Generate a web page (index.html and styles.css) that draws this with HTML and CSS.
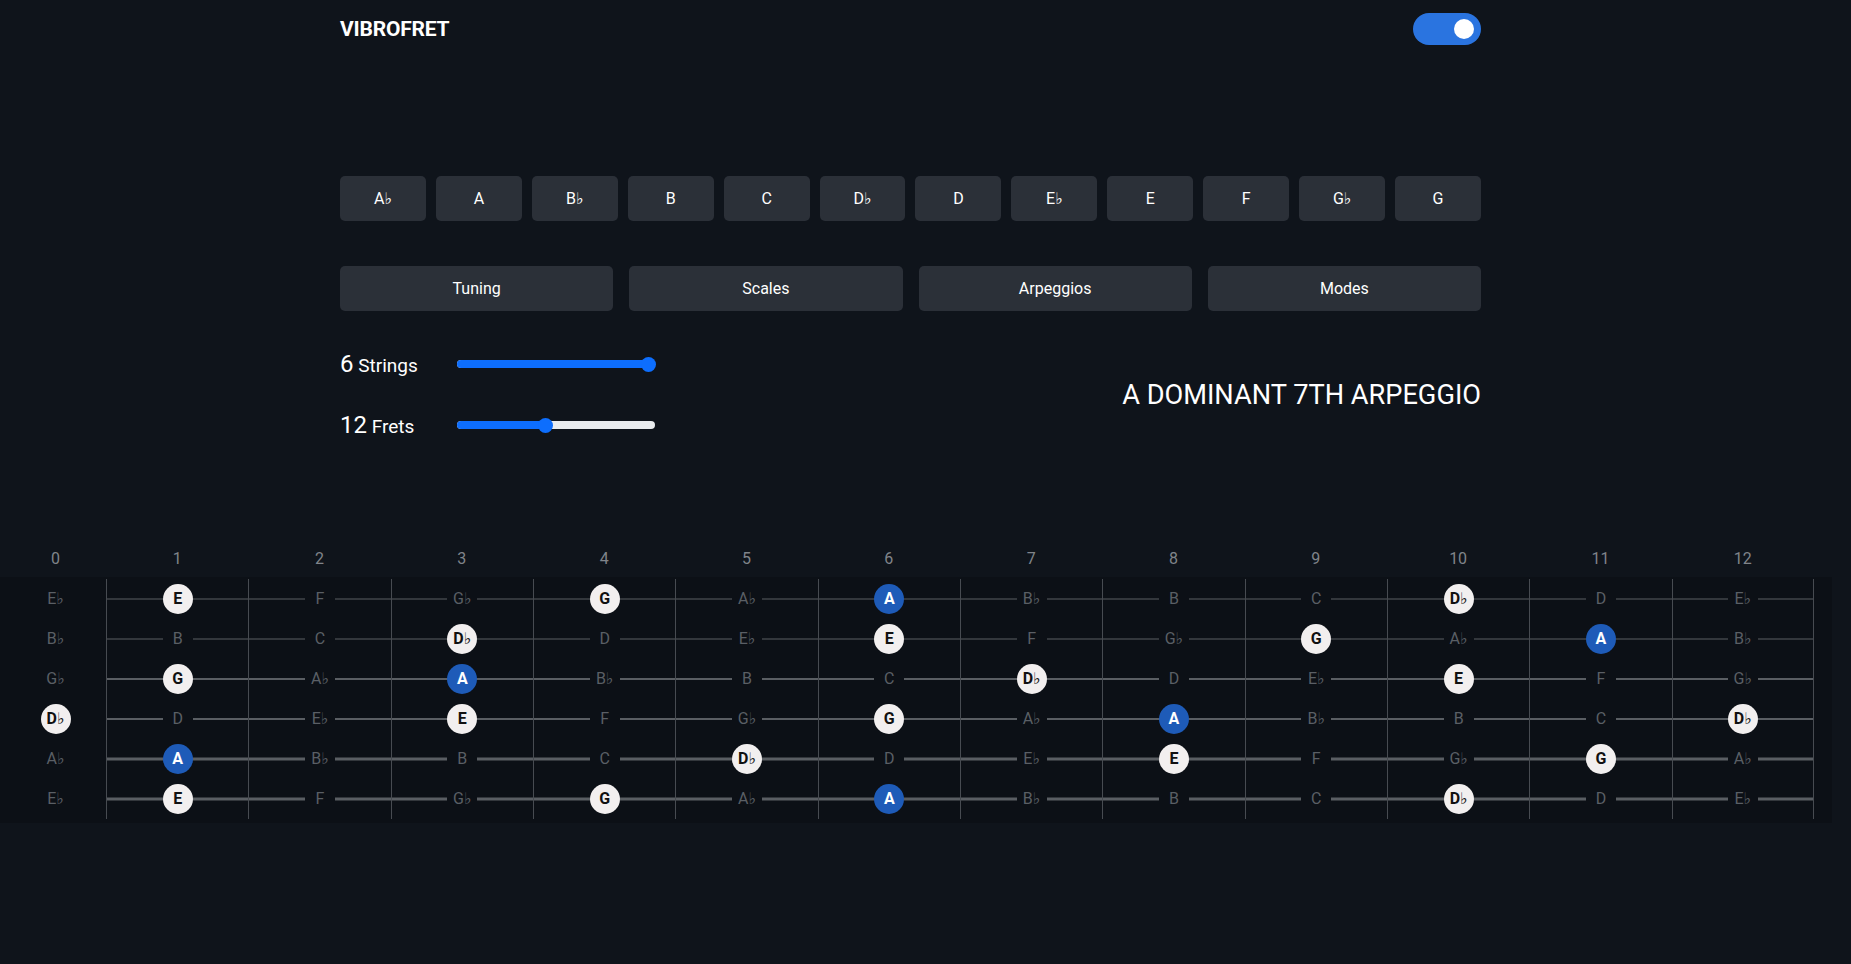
FILE: index.html
```html
<!DOCTYPE html>
<html lang="en">
<head>
<meta charset="utf-8">
<title>Vibrofret</title>
<link rel="stylesheet" href="styles.css">
</head>
<body>
<header class="container topbar">
  <div class="brand">VIBROFRET</div>
  <div class="toggle"><span class="knob"></span></div>
</header>

<main class="container">
  <div class="keys">
    <button class="btn">A♭</button>
    <button class="btn">A</button>
    <button class="btn">B♭</button>
    <button class="btn">B</button>
    <button class="btn">C</button>
    <button class="btn">D♭</button>
    <button class="btn">D</button>
    <button class="btn">E♭</button>
    <button class="btn">E</button>
    <button class="btn">F</button>
    <button class="btn">G♭</button>
    <button class="btn">G</button>
  </div>

  <div class="modes">
    <button class="btn">Tuning</button>
    <button class="btn">Scales</button>
    <button class="btn">Arpeggios</button>
    <button class="btn">Modes</button>
  </div>

  <div class="controls">
    <div class="sliders">
      <div class="slider-row">
        <span class="slider-label"><span class="num">6</span> Strings</span>
        <div class="range">
          <div class="fill" style="width:100%"></div>
          <span class="thumb" style="left:191px"></span>
        </div>
      </div>
      <div class="slider-row">
        <span class="slider-label"><span class="num">12</span> Frets</span>
        <div class="range">
          <div class="fill" style="width:88px"></div>
          <span class="thumb" style="left:88px"></span>
        </div>
      </div>
    </div>
    <h2 class="chord-title">A DOMINANT 7TH ARPEGGIO</h2>
  </div>
</main>

<section class="fretboard">
  <div class="fret-numbers">
    <span>0</span><span>1</span><span>2</span><span>3</span><span>4</span><span>5</span><span>6</span><span>7</span><span>8</span><span>9</span><span>10</span><span>11</span><span>12</span>
  </div>
  <div class="board">
    <div class="string s1">
      <div class="cell open"><span class="n">E♭</span></div>
      <div class="cell"><span class="n hl">E</span></div>
      <div class="cell"><span class="n">F</span></div>
      <div class="cell"><span class="n">G♭</span></div>
      <div class="cell"><span class="n hl">G</span></div>
      <div class="cell"><span class="n">A♭</span></div>
      <div class="cell"><span class="n root">A</span></div>
      <div class="cell"><span class="n">B♭</span></div>
      <div class="cell"><span class="n">B</span></div>
      <div class="cell"><span class="n">C</span></div>
      <div class="cell"><span class="n hl">D♭</span></div>
      <div class="cell"><span class="n">D</span></div>
      <div class="cell last"><span class="n">E♭</span></div>
    </div>
    <div class="string s2">
      <div class="cell open"><span class="n">B♭</span></div>
      <div class="cell"><span class="n">B</span></div>
      <div class="cell"><span class="n">C</span></div>
      <div class="cell"><span class="n hl">D♭</span></div>
      <div class="cell"><span class="n">D</span></div>
      <div class="cell"><span class="n">E♭</span></div>
      <div class="cell"><span class="n hl">E</span></div>
      <div class="cell"><span class="n">F</span></div>
      <div class="cell"><span class="n">G♭</span></div>
      <div class="cell"><span class="n hl">G</span></div>
      <div class="cell"><span class="n">A♭</span></div>
      <div class="cell"><span class="n root">A</span></div>
      <div class="cell last"><span class="n">B♭</span></div>
    </div>
    <div class="string s3">
      <div class="cell open"><span class="n">G♭</span></div>
      <div class="cell"><span class="n hl">G</span></div>
      <div class="cell"><span class="n">A♭</span></div>
      <div class="cell"><span class="n root">A</span></div>
      <div class="cell"><span class="n">B♭</span></div>
      <div class="cell"><span class="n">B</span></div>
      <div class="cell"><span class="n">C</span></div>
      <div class="cell"><span class="n hl">D♭</span></div>
      <div class="cell"><span class="n">D</span></div>
      <div class="cell"><span class="n">E♭</span></div>
      <div class="cell"><span class="n hl">E</span></div>
      <div class="cell"><span class="n">F</span></div>
      <div class="cell last"><span class="n">G♭</span></div>
    </div>
    <div class="string s4">
      <div class="cell open"><span class="n hl">D♭</span></div>
      <div class="cell"><span class="n">D</span></div>
      <div class="cell"><span class="n">E♭</span></div>
      <div class="cell"><span class="n hl">E</span></div>
      <div class="cell"><span class="n">F</span></div>
      <div class="cell"><span class="n">G♭</span></div>
      <div class="cell"><span class="n hl">G</span></div>
      <div class="cell"><span class="n">A♭</span></div>
      <div class="cell"><span class="n root">A</span></div>
      <div class="cell"><span class="n">B♭</span></div>
      <div class="cell"><span class="n">B</span></div>
      <div class="cell"><span class="n">C</span></div>
      <div class="cell last"><span class="n hl">D♭</span></div>
    </div>
    <div class="string s5">
      <div class="cell open"><span class="n">A♭</span></div>
      <div class="cell"><span class="n root">A</span></div>
      <div class="cell"><span class="n">B♭</span></div>
      <div class="cell"><span class="n">B</span></div>
      <div class="cell"><span class="n">C</span></div>
      <div class="cell"><span class="n hl">D♭</span></div>
      <div class="cell"><span class="n">D</span></div>
      <div class="cell"><span class="n">E♭</span></div>
      <div class="cell"><span class="n hl">E</span></div>
      <div class="cell"><span class="n">F</span></div>
      <div class="cell"><span class="n">G♭</span></div>
      <div class="cell"><span class="n hl">G</span></div>
      <div class="cell last"><span class="n">A♭</span></div>
    </div>
    <div class="string s6">
      <div class="cell open"><span class="n">E♭</span></div>
      <div class="cell"><span class="n hl">E</span></div>
      <div class="cell"><span class="n">F</span></div>
      <div class="cell"><span class="n">G♭</span></div>
      <div class="cell"><span class="n hl">G</span></div>
      <div class="cell"><span class="n">A♭</span></div>
      <div class="cell"><span class="n root">A</span></div>
      <div class="cell"><span class="n">B♭</span></div>
      <div class="cell"><span class="n">B</span></div>
      <div class="cell"><span class="n">C</span></div>
      <div class="cell"><span class="n hl">D♭</span></div>
      <div class="cell"><span class="n">D</span></div>
      <div class="cell last"><span class="n">E♭</span></div>
    </div>
  </div>
</section>
</body>
</html>
```

FILE: styles.css
```css
* { box-sizing: border-box; }

html, body {
  margin: 0;
  padding: 0;
  background: #0f141b;
  color: #ffffff;
  font-family: Roboto, "DejaVu Sans", sans-serif;
}

.container {
  width: 1171px;
  margin: 0 auto;
  padding-right: 30px;
}

.topbar {
  height: 57px;
  display: flex;
  align-items: center;
  justify-content: space-between;
}

.brand {
  font-size: 21px;
  font-weight: 700;
  letter-spacing: -0.2px;
}

.toggle {
  width: 68px;
  height: 32px;
  border-radius: 16px;
  background: #2a74e0;
  display: flex;
  align-items: center;
  justify-content: flex-end;
  padding-right: 7px;
}

.knob {
  width: 20px;
  height: 20px;
  border-radius: 50%;
  background: #ffffff;
}

.btn {
  height: 45px;
  border: none;
  border-radius: 5px;
  background: #2b3038;
  color: #ffffff;
  font-family: Roboto, "DejaVu Sans", sans-serif;
  font-size: 16px;
  padding: 0;
}

.keys {
  margin-top: 119px;
  display: grid;
  grid-template-columns: repeat(12, 1fr);
  gap: 10px;
}

.modes {
  margin-top: 45px;
  display: grid;
  grid-template-columns: repeat(4, 1fr);
  gap: 16px;
}

.controls {
  margin-top: 35px;
  display: flex;
  align-items: center;
  justify-content: space-between;
}

.sliders {
  display: flex;
  flex-direction: column;
  gap: 25px;
}

.slider-row {
  height: 36px;
  display: flex;
  align-items: center;
}

.slider-label {
  width: 117px;
  font-size: 19px;
}

.slider-label .num {
  font-size: 24px;
}

.range {
  position: relative;
  width: 198px;
  height: 8px;
  border-radius: 4px;
  background: #e9ecef;
}

.fill {
  height: 100%;
  border-radius: 4px;
  background: #0d6efd;
}

.thumb {
  position: absolute;
  top: 50%;
  width: 15px;
  height: 15px;
  margin: -7.5px 0 0 -7.5px;
  border-radius: 50%;
  background: #0d6efd;
}

.chord-title {
  margin: 0;
  font-size: 27.2px;
  font-weight: 400;
  color: #ffffff;
}

.fretboard {
  margin-top: 100px;
  --cols: 101px repeat(12, 142.33px);
}

.fret-numbers {
  display: grid;
  grid-template-columns: var(--cols);
  height: 30px;
  align-items: center;
  padding-left: 5px;
  margin-bottom: 4px;
}

.fret-numbers span {
  text-align: center;
  font-size: 16px;
  color: #80848a;
}

.board {
  width: 1832px;
  padding: 2px 18px 4px 5px;
  background: #0c1016;
}

.string {
  display: grid;
  grid-template-columns: var(--cols);
  height: 40px;
}

.cell {
  position: relative;
  display: flex;
  align-items: center;
  justify-content: center;
  border-left: 1px solid #474b51;
}

.cell.open {
  border-left: none;
}

.cell.last {
  border-right: 1px solid #474b51;
}

.cell:not(.open)::before {
  content: "";
  position: absolute;
  left: 0;
  right: 0;
  top: 50%;
  height: var(--t, 1px);
  transform: translateY(-50%);
  background: #5a5e63;
}

.s1, .s2 { --t: 1px; }
.s3, .s4 { --t: 2px; }
.s5, .s6 { --t: 3px; }

.n {
  position: relative;
  width: 30px;
  height: 30px;
  line-height: 30px;
  text-align: center;
  font-size: 16px;
  color: #5a5f65;
  background: #0c1016;
}

.n.hl {
  border-radius: 50%;
  background: #f2efef;
  color: #111111;
  font-weight: 700;
}

.n.root {
  border-radius: 50%;
  background: #1e5bb8;
  color: #ffffff;
  font-weight: 700;
}
```
